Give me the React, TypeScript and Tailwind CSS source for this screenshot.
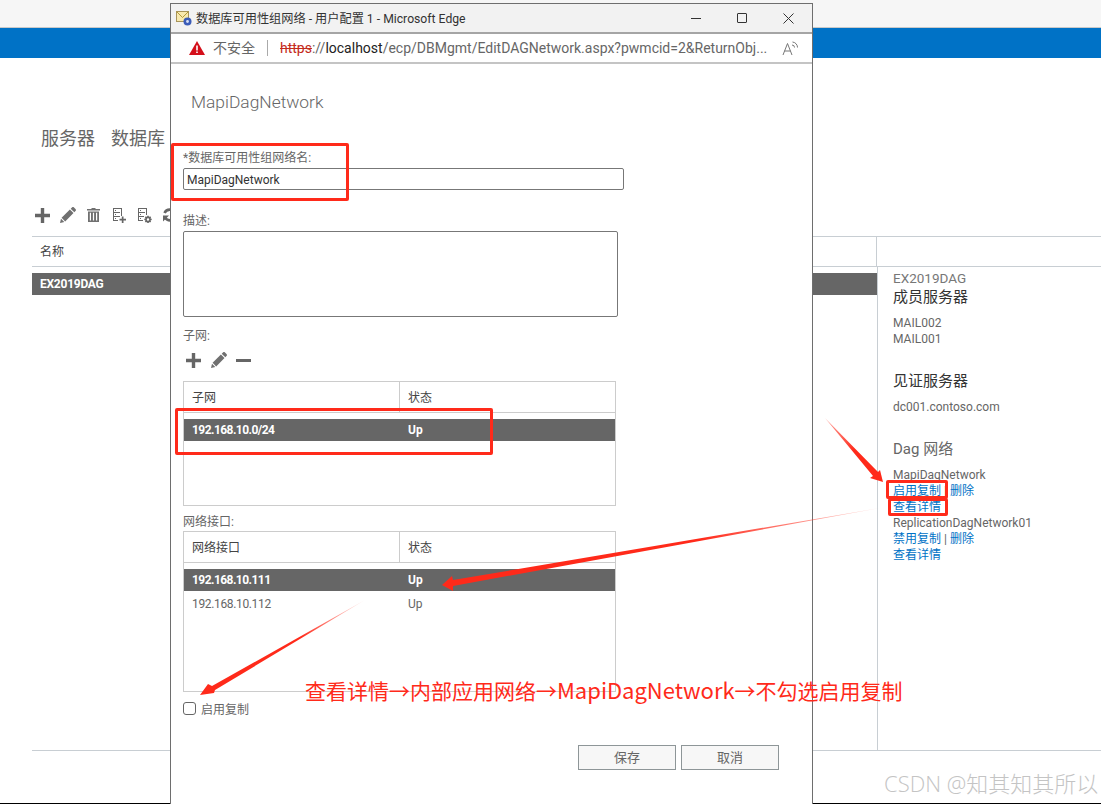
const base = "font-['Roboto','Noto_Sans_CJK_SC',sans-serif]";

function PlusIcon() {
  return (
    <svg width="15" height="15" viewBox="0 0 15 15" className="fill-[#666]">
      <path d="M5.800 0h3.400v5.800H15v3.400H9.200V15H5.800V9.200H0V5.800h5.800z" />
    </svg>
  );
}

function PencilIcon() {
  return (
    <svg width="16" height="16" viewBox="0 0 16 16" className="fill-[#707070]">
      <path d="M12.200 0.300c.6-.4 1.300-.3 1.800.2l1.500 1.500c.5.500.6 1.200.2 1.800l-1.400 1.500-3.600-3.600zM9.900 2.500l3.600 3.600-8.300 8.300-3.600-3.600zM1 11.700l3.300 3.300-4.300 1z" />
    </svg>
  );
}

function TrashIcon() {
  return (
    <svg width="13" height="14" viewBox="0 0 13 14" className="fill-[#707070]">
      <path d="M4.500 0h4v1h4.500v1.500H0V1h4.500zM1 3.500h11V14H1zM2.800 4.800v7.700h1.200V4.800zM5.900 4.800v7.700h1.200V4.800zM9 4.800v7.700h1.200V4.800z" fillRule="evenodd" />
    </svg>
  );
}

function DocPlusIcon() {
  return (
    <svg width="13" height="15" viewBox="0 0 13 15" className="fill-[#666]">
      <path d="M0 0h9v8H8V1H1v3h6v1H1v3h6v1H1v3h4v1H0zM2 2h1v1H2zM2 6h1v1H2zM2 10h1v1H2z" />
      <path d="M8.800 8.500h1.700v2.300H13v1.700h-2.500V15H8.800v-2.500H6.500v-1.700h2.300z" />
    </svg>
  );
}

function DocGearIcon() {
  return (
    <svg width="14" height="15" viewBox="0 0 14 15" className="fill-[#666]">
      <path d="M0 0h9v7H8V1H1v3h6v1H1v3h5v1H1v3h4v1H0zM2 2h1v1H2zM2 6h1v1H2zM2 10h1v1H2z" />
      <path d="M9.300 7.700h1.400l.3 1.200 1.100-.6 1 1-.6 1.100 1.200.3v1.400l-1.200.3.6 1.100-1 1-1.100-.6-.3 1.200H9.300l-.3-1.200-1.100.6-1-1 .6-1.100-1.200-.3v-1.400l1.200-.3-.6-1.100 1-1 1.100.6zM10 10.300a1.200 1.200 0 1 0 0 2.400 1.200 1.200 0 0 0 0-2.400z" fillRule="evenodd" />
    </svg>
  );
}

function RefreshIcon() {
  return (
    <svg width="16" height="16" viewBox="0 0 16 16" fill="none" className="stroke-[#666]">
      <path d="M13 5.500A6 6 0 0 0 2.500 6M3 10.500A6 6 0 0 0 13.500 10" strokeWidth="2.600" />
      <path d="M15 1.500v6h-6zM1 14.500v-6h6z" className="fill-[#666] stroke-none" />
    </svg>
  );
}

function MailAppIcon() {
  return (
    <svg width="17" height="15" viewBox="0 0 17 15">
      <rect x="1.500" y="0.500" width="12" height="10" fill="#f8e9ae" stroke="#a8945a" />
      <path d="M1.500 0.500l6 6 6-6" fill="none" stroke="#b39a3a" />
      <circle cx="12.500" cy="10.500" r="4" fill="#3b5cb8" />
      <circle cx="12.500" cy="10.500" r="1.400" fill="#d7e0f5" />
    </svg>
  );
}

function ReadAloudIcon() {
  return (
    <svg width="17" height="16" viewBox="0 0 17 16" fill="none" className="stroke-[#777]">
      <path d="M1 15L5.500 3.500 10 15M2.500 11h6" />
      <path d="M10 5a2.500 2.500 0 0 1 2.500 2.500M10.500 2a5.500 5.500 0 0 1 5 5.500" />
    </svg>
  );
}

function GridTable({ first, rows, height }: { first: string; rows: { name: string; state: string; selected?: boolean }[]; height: string }) {
  return (
    <div className={`w-[433px] border border-[#ccc] ${height}`}>
      <div className="flex h-[31px] border-b border-[#ccc] text-[12px] text-[#444]">
        <div className="w-[216px] border-r border-[#ccc] pl-2 leading-[32px]">{first}</div>
        <div className="pl-2 leading-[32px]">状态</div>
      </div>
      <div className="pt-[6px]">
        {rows.map((r) => (
          <div
            key={r.name}
            className={`flex h-[22px] items-center text-[12px] ${r.selected ? "bg-[#666] font-bold text-white mb-[2px]" : "text-[#666]"}`}
          >
            <div className={`w-[216px] pl-2 ${r.selected ? "tracking-[-0.55px]" : "tracking-[-0.35px]"}`}>{r.name}</div>
            <div className="pl-2">{r.state}</div>
          </div>
        ))}
      </div>
    </div>
  );
}

function Popup() {
  return (
    <div className="absolute left-[170px] top-[3px] w-[643px] h-[801px] border-x border-t border-[#6e6e6e] bg-white">
      <div className="flex h-[30px] items-center bg-[#f2f2f2] border-b-2 border-[#a5a5a5] pl-1 text-[12.200px] text-[#333]">
        <MailAppIcon />
        <span className="ml-[4px] flex-1 pt-[2px]">数据库可用性组网络 - 用户配置 1 - Microsoft Edge</span>
        <div className="flex items-center pr-px text-[#333]">
          <span className="w-[46px] flex justify-center"><span className="block w-[10px] h-px bg-[#333]" /></span>
          <span className="w-[46px] flex justify-center"><span className="block w-[10px] h-[10px] rounded-[1px] border border-[#333]" /></span>
          <span className="w-[46px] flex justify-center">
            <svg width="11" height="11" viewBox="0 0 11 11" className="stroke-[#333]"><path d="M0.500 0.500l10 10M10.500 0.500l-10 10" /></svg>
          </span>
        </div>
      </div>
      <div className="flex h-[30px] items-center border-b-2 border-[#c4c4c4] pl-[18px] text-[14px]">
        <svg width="16" height="14" viewBox="0 0 16 14">
          <path d="M8 0L16 14H0z" fill="#d40f1a" />
          <path d="M7.200 4.500h1.600v5H7.200zM7.200 10.500h1.600v1.600H7.200z" fill="#fff" />
        </svg>
        <span className="ml-2 text-[14px] text-[#666]">不安全</span>
        <span className="mx-3 h-[16px] w-px bg-[#aaa]" />
        <span className="w-[489px] whitespace-nowrap text-[#666]">
          <span className="text-[#c42b1c] line-through">https</span>://<span className="text-[#222]">localhost</span>/ecp/DBMgmt/EditDAGNetwork.aspx?pwmcid=2&amp;ReturnObj...
        </span>
        <span className="ml-[13px]"><ReadAloudIcon /></span>
      </div>
      <div className="px-3 pt-[26px]">
        <h1 className="ml-2 text-[17.400px] font-light leading-[24px] text-[#666]">MapiDagNetwork</h1>
        <div className="mt-[35px] text-[12px] leading-[18px] text-[#666]">*数据库可用性组网络名:</div>
        <div className="mt-px h-[22px] w-[441px] rounded-[2px] border border-[#777] pl-[3px] text-[12px] leading-[23px] text-[#333]">MapiDagNetwork</div>
        <div className="mt-[22px] text-[12px] leading-[18px] text-[#666]">描述:</div>
        <div className="mt-px h-[86px] w-[435px] rounded-[2px] border border-[#777]" />
        <div className="mt-[10px] text-[12px] leading-[18px] text-[#666]">子网:</div>
        <div className="mt-[6px] flex h-[18px] items-center pl-[3px]">
          <PlusIcon />
          <span className="ml-[10px]"><PencilIcon /></span>
          <span className="ml-[9px] block h-[3px] w-[15px] bg-[#666]" />
        </div>
        <div className="mt-[12px]">
          <GridTable first="子网" height="h-[125px]" rows={[{ name: "192.168.10.0/24", state: "Up", selected: true }]} />
        </div>
        <div className="mt-[7px] text-[12px] leading-[18px] text-[#666]">网络接口:</div>
        <div>
          <GridTable
            first="网络接口"
            height="h-[161px]"
            rows={[
              { name: "192.168.10.111", state: "Up", selected: true },
              { name: "192.168.10.112", state: "Up" },
            ]}
          />
        </div>
        <div className="mt-[7px] flex items-center gap-[5px] text-[12px] text-[#666]">
          <span className="block h-[13px] w-[13px] rounded-[3px] border border-[#666]" />
          <span className="pt-[3px] leading-[16px]">启用复制</span>
        </div>
        <div className="mt-[27px] flex justify-end gap-[5px] pr-[21px]">
          <button className="h-[25px] w-[98px] border border-[#8e9698] bg-[#f7f7f7] text-[13px] text-[#666]">保存</button>
          <button className="h-[25px] w-[98px] border border-[#8e9698] bg-[#f7f7f7] text-[13px] text-[#666]">取消</button>
        </div>
      </div>
    </div>
  );
}

function DetailsPane() {
  const link = "text-[#0072c6]";
  return (
    <div className="pl-[15px] text-[12px] leading-[16px] text-[#666]">
      <div className="mt-[2px] text-[13.500px] leading-[18px] text-[#777]">EX2019DAG</div>
      <div className="text-[15px] leading-[20px] text-[#333]">成员服务器</div>
      <div className="mt-[8px]">MAIL002</div>
      <div>MAIL001</div>
      <div className="mt-[24px] text-[15px] leading-[20px] text-[#333]">见证服务器</div>
      <div className="mt-[8px]">dc001.contoso.com</div>
      <div className="mt-[24px] text-[15px] leading-[20px] text-[#666]">Dag 网络</div>
      <div className="mt-[8px]">MapiDagNetwork</div>
      <div><span className={link}>启用复制</span> | <span className={link}>删除</span></div>
      <div className={link}>查看详情</div>
      <div>ReplicationDagNetwork01</div>
      <div><span className={link}>禁用复制</span> | <span className={link}>删除</span></div>
      <div className={link}>查看详情</div>
    </div>
  );
}

function Annotations() {
  const box = "absolute rounded-[2px] border-[3px] border-[#ff2a1a]";
  return (
    <>
      <div className={`${box} left-[171px] top-[143px] w-[178px] h-[58px]`} />
      <div className={`${box} left-[175px] top-[408px] w-[318px] h-[47px]`} />
      <div className={`${box} left-[886px] top-[480px] w-[62px] h-[19px]`} />
      <div className={`${box} left-[888px] top-[498px] w-[60px] h-[18px]`} />
      <svg width="1101" height="804" viewBox="0 0 1101 804" className="absolute inset-0 pointer-events-none">
        <defs>
          <linearGradient id="a1" gradientUnits="userSpaceOnUse" x1="825" y1="418" x2="855" y2="450">
            <stop offset="0" stopColor="#ff2a1a" stopOpacity="0.400" />
            <stop offset="1" stopColor="#ff2a1a" />
          </linearGradient>
          <linearGradient id="a2" gradientUnits="userSpaceOnUse" x1="880" y1="508" x2="700" y2="540">
            <stop offset="0" stopColor="#ff2a1a" stopOpacity="0.200" />
            <stop offset="1" stopColor="#ff2a1a" />
          </linearGradient>
          <linearGradient id="a3" gradientUnits="userSpaceOnUse" x1="365" y1="600" x2="300" y2="637">
            <stop offset="0" stopColor="#ff2a1a" stopOpacity="0.100" />
            <stop offset="1" stopColor="#ff2a1a" />
          </linearGradient>
        </defs>
        <path d="M825 418L878 472 880 470 883 482 870 478 873 476z" fill="url(#a1)" />
        <path d="M880 508L453 580 452 576 442 585 453 591 453 586z" fill="url(#a2)" />
        <path d="M365 600L212 686 208 684 200 695 214 693 215 690z" fill="url(#a3)" />
      </svg>
      <div className="absolute left-[305px] top-[675px] whitespace-nowrap font-['Noto_Sans_CJK_SC',sans-serif] text-[21px] leading-[28px] text-[#ff2a1a]">
        查看详情→内部应用网络→<span className="text-[22px]">MapiDagNetwork</span>→不勾选启用复制
      </div>
      <div className="absolute left-[884px] top-[769px] whitespace-nowrap font-['Open_Sans','Noto_Sans_CJK_SC',sans-serif] text-[22px] font-light leading-[28px] text-[#c4c4c4]">
        CSDN @知其知其所以
      </div>
    </>
  );
}

export default function App() {
  return (
    <div className={`relative h-[804px] w-[1101px] overflow-hidden bg-white ${base}`}>
      <div className="h-7 border-b border-[#c9c9c9] bg-[#f6f6f6]" />
      <div className="h-[30px] bg-[#0072c6]" />
      <div className="ml-[41px] mt-[67px] flex h-[26px] items-center gap-4 text-[18px] text-[#666]">
        <span>服务器</span>
        <span>数据库</span>
      </div>
      <div className="ml-[35px] mt-[55px] flex h-[18px] items-center">
        <PlusIcon />
        <span className="ml-[10px]"><PencilIcon /></span>
        <span className="ml-[11px]"><TrashIcon /></span>
        <span className="ml-[13px]"><DocPlusIcon /></span>
        <span className="ml-[12px]"><DocGearIcon /></span>
        <span className="ml-[10px]"><RefreshIcon /></span>
      </div>
      <div className="ml-[32px] mt-[12px] h-[515px] border-b border-[#c8ced3]">
        <div className="flex h-[31px] border-y border-[#c8ced3] text-[12px] text-[#444]">
          <div className="w-[845px] border-r border-[#c8ced3] pl-2 leading-[31px]">名称</div>
        </div>
        <div className="flex h-[483px]">
          <div className="w-[846px] border-r border-[#c8ced3] pt-[6px]">
            <div className="h-[22px] bg-[#666] pl-2 text-[12px] font-bold leading-[22px] tracking-[-0.25px] text-white">EX2019DAG</div>
          </div>
          <DetailsPane />
        </div>
      </div>
      <div className="absolute bottom-0 left-0 h-px w-full bg-black" />
      <Popup />
      <Annotations />
    </div>
  );
}
